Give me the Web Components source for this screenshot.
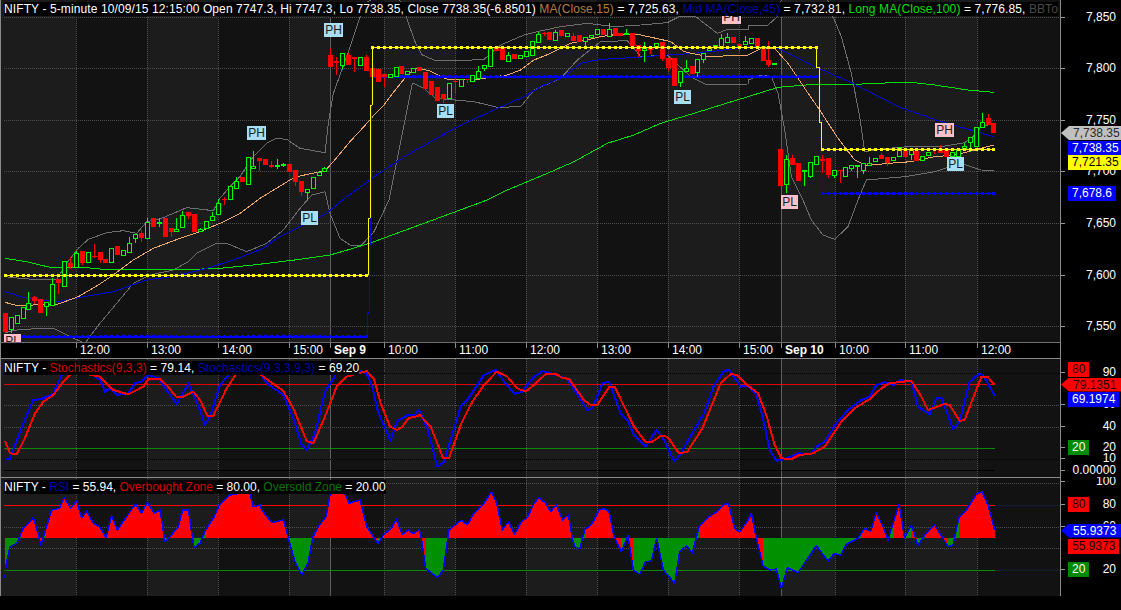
<!DOCTYPE html>
<html>
<head>
<meta charset="utf-8">
<title>NIFTY</title>
<style>
  html, body { margin: 0; background: #000; }
  body { font: 12px "Liberation Sans", Arial, sans-serif; color: #fff; overflow: hidden; }
  .o { color: #b87f45; } .n { color: #0000b4; } .g { color: #00e000; } .d { color: #4a4a4a; }
  .r { color: #dc0000; } .z { color: #007a00; }
</style>
</head>
<body>
<chart-app>
  <chart-pane top="0" plot="342" spacing="0.105">
    <price-plot slot="canvas"></price-plot>
    <chart-marker x="324" y="23" kind="high">PH</chart-marker>
    <chart-marker x="247" y="126" kind="high">PH</chart-marker>
    <chart-marker x="301" y="211" kind="high">PL</chart-marker>
    <chart-marker x="437" y="104" kind="high">PL</chart-marker>
    <chart-marker x="674" y="90" kind="high">PL</chart-marker>
    <chart-marker x="947" y="157" kind="high">PL</chart-marker>
    <chart-marker x="722" y="10" kind="low">PH</chart-marker>
    <chart-marker x="935" y="123" kind="low">PH</chart-marker>
    <chart-marker x="781" y="195" kind="low">PL</chart-marker>
    <chart-marker x="4" y="334" kind="low">PL</chart-marker>
    <span slot="title">NIFTY - 5-minute 10/09/15 12:15:00 Open 7747.3, Hi 7747.3, Lo 7738.35, Close 7738.35(-6.8501) <span class="o">MA(Close,15)</span> = 7,725.63, <span class="n">Mid MA(Close,45)</span> = 7,732.81, <span class="g">Long MA(Close,100)</span> = 7,776.85, <span class="d">BBTop(Close,20,2)</span></span>
    <axis-label slot="axis" y="17">7,850</axis-label>
    <axis-label slot="axis" y="68">7,800</axis-label>
    <axis-label slot="axis" y="120">7,750</axis-label>
    <axis-label slot="axis" y="171">7,700</axis-label>
    <axis-label slot="axis" y="223">7,650</axis-label>
    <axis-label slot="axis" y="275">7,600</axis-label>
    <axis-label slot="axis" y="326">7,550</axis-label>
    <axis-tag slot="axis" y="133" bg="#c0c0c0" fg="#2a2a2a" arrow>7,738.35</axis-tag>
    <axis-tag slot="axis" y="148" bg="#0000ff" fg="#fff">7,738.35</axis-tag>
    <axis-tag slot="axis" y="162.5" bg="#ffff00" fg="#000">7,721.35</axis-tag>
    <axis-tag slot="axis" y="193.5" bg="#0000ff" fg="#fff">7,678.6</axis-tag>
    <time-tick slot="times" x="76">12:00</time-tick>
    <time-tick slot="times" x="147">13:00</time-tick>
    <time-tick slot="times" x="218">14:00</time-tick>
    <time-tick slot="times" x="289">15:00</time-tick>
    <time-tick slot="times" x="330" day>Sep 9</time-tick>
    <time-tick slot="times" x="384">10:00</time-tick>
    <time-tick slot="times" x="455">11:00</time-tick>
    <time-tick slot="times" x="526">12:00</time-tick>
    <time-tick slot="times" x="597">13:00</time-tick>
    <time-tick slot="times" x="668">14:00</time-tick>
    <time-tick slot="times" x="739">15:00</time-tick>
    <time-tick slot="times" x="781" day>Sep 10</time-tick>
    <time-tick slot="times" x="835">10:00</time-tick>
    <time-tick slot="times" x="905">11:00</time-tick>
    <time-tick slot="times" x="977">12:00</time-tick>
  </chart-pane>

  <chart-pane top="358" plot="119" ruled spacing="0.06">
    <stoch-plot slot="canvas"></stoch-plot>
    <span slot="title">NIFTY - <span class="r">Stochastics(9,3,3)</span> = 79.14, <span class="n">Stochastics(9,3,3,9,3)</span> = 69.20</span>
    <axis-label slot="axis" y="373">90</axis-label>
    <axis-label slot="axis" y="405">60</axis-label>
    <axis-label slot="axis" y="427">40</axis-label>
    <axis-label slot="axis" y="448">20</axis-label>
    <axis-label slot="axis" y="459">10</axis-label>
    <axis-label slot="axis" y="471">0.00000</axis-label>
    <axis-tag slot="axis" y="370.5" bg="#ff0000" fg="#200000">80</axis-tag>
    <axis-tag slot="axis" y="385.5" bg="#ff0000" fg="#200000" arrow>79.1351</axis-tag>
    <axis-tag slot="axis" y="400.5" bg="#0000ff" fg="#fff">69.1974</axis-tag>
    <axis-tag slot="axis" y="448.5" bg="#008a00" fg="#fff">20</axis-tag>
  </chart-pane>

  <chart-pane top="477" plot="119" ruled>
    <rsi-plot slot="canvas"></rsi-plot>
    <span slot="title">NIFTY - <span class="n">RSI</span> = 55.94, <span class="r">Overbought Zone</span> = 80.00, <span class="z">Oversold Zone</span> = 20.00</span>
    <axis-label slot="axis" y="482">100</axis-label>
    <axis-label slot="axis" y="505">80</axis-label>
    <axis-label slot="axis" y="527">60</axis-label>
    <axis-label slot="axis" y="570">20</axis-label>
    <axis-tag slot="axis" y="505.5" bg="#ff0000" fg="#200000">80</axis-tag>
    <axis-tag slot="axis" y="531.5" bg="#0000ff" fg="#fff" arrow>55.9373</axis-tag>
    <axis-tag slot="axis" y="547" bg="#ff0000" fg="#200000">55.9373</axis-tag>
    <axis-tag slot="axis" y="570.5" bg="#008a00" fg="#fff">20</axis-tag>
  </chart-pane>
</chart-app>

<script>
const NS = 'http://www.w3.org/2000/svg'

// bar position: 12 bars per hour, 71px per hour
const barX = (i) => 5.3 + 5.92 * i

// colour bands, one per hour
const BANDS = [[1, 76, 1], [76, 147, 0], [147, 218, 1], [218, 289, 0], [289, 330, 1], [330, 384, 0], [384, 455, 1],
  [455, 526, 0], [526, 597, 1], [597, 668, 0], [668, 739, 1], [739, 781, 0], [781, 835, 1],
  [835, 905, 0], [905, 977, 1], [977, 1060, 0]]
const GRID_X = [76, 147, 218, 289, 384, 455, 526, 597, 668, 739, 835, 905, 977]
const DAY_X = [330, 781]

// traces are written in the coordinates of a 3x crop, t() brings them to the page
const t = (ox, oy, pts) => pts.map(([x, y]) => [ox + x / 3, oy + y / 3])

class ChartApp extends HTMLElement {
  constructor() {
    super()
    this.attachShadow({ mode: 'open' }).innerHTML = `
      <style>:host { display: flex; flex-direction: column; width: 1121px; height: 610px; background: #000; }</style>
      <slot></slot>`
  }
}

class ChartPane extends HTMLElement {
  constructor() {
    super()
    this.attachShadow({ mode: 'open' }).innerHTML = `
      <style>
        :host { display: grid; grid-template-columns: 1061px 60px; }
        .plot, .times { border-left: 1px solid #8a8a8a; border-right: 1px solid #8a8a8a; box-sizing: border-box; position: relative; overflow: hidden; }
        .title { position: absolute; left: 3px; top: 2px; height: 14px; line-height: 14px; background: #000; white-space: nowrap; max-width: 1054px; overflow: hidden; color: #fff; }
        .axis { position: relative; grid-row: 1 / span 2; grid-column: 2; background: #000; overflow: hidden; }
        .times { height: 16px; background: #000; border-top: 1px solid #6e6e6e; }
        :host([ruled]) .plot { border-top: 1px solid #8a8a8a; }
      </style>
      <div class="plot"><slot name="canvas"></slot><slot></slot><div class="title"><slot name="title"></slot></div></div>
      <div class="axis"><slot name="axis"></slot></div>
      <div class="times"><slot name="times"></slot></div>`
  }
  connectedCallback() {
    const plot = this.shadowRoot.querySelector('.plot')
    plot.style.height = this.getAttribute('plot') + 'px'
    if (this.hasAttribute('spacing')) this.shadowRoot.querySelector('.title').style.letterSpacing = this.getAttribute('spacing') + 'px'
    if (!this.querySelector('[slot=times]')) this.shadowRoot.querySelector('.times').style.display = 'none'
  }
}

// anything pinned to the chart gets page coordinates and converts them to its pane
class PinnedElement extends HTMLElement {
  get paneTop() {
    const pane = this.closest('chart-pane')
    return +pane.getAttribute('top') + (pane.hasAttribute('ruled') ? 1 : 0)
  }
}

class ChartMarker extends PinnedElement {
  constructor() {
    super()
    this.attachShadow({ mode: 'open' }).innerHTML = `
      <style>
        :host { position: absolute; display: block; width: 19px; height: 14px; line-height: 14px; text-align: center; color: #1c1c1c; background: #a9dff5; }
        :host([kind=low]) { background: #ffc0cb; }
      </style><slot></slot>`
  }
  connectedCallback() {
    this.style.left = (this.getAttribute('x') - 1) + 'px'
    this.style.top = (this.getAttribute('y') - this.paneTop) + 'px'
    if (this.textContent === 'PL') this.style.width = '17px'
  }
}

class AxisLabel extends PinnedElement {
  constructor() {
    super()
    this.attachShadow({ mode: 'open' }).innerHTML = `
      <style>
        :host { position: absolute; left: 0; right: 5px; height: 14px; line-height: 14px; text-align: right; color: #fff; }
        i { position: absolute; left: 0; top: 7px; width: 4px; height: 1px; background: #9a9a9a; }
      </style><i></i><slot></slot>`
  }
  connectedCallback() {
    this.style.top = (this.getAttribute('y') - this.paneTop - 7) + 'px'
  }
}

class AxisTag extends PinnedElement {
  constructor() {
    super()
    this.attachShadow({ mode: 'open' }).innerHTML = `
      <style>
        :host { position: absolute; left: 7px; height: 15px; line-height: 15px; padding: 0 4px; white-space: nowrap; z-index: 2; }
        :host([arrow]) { left: 0; right: 0; height: 14px; line-height: 14px; padding: 0 0 0 12px; clip-path: polygon(0 50%, 8px 0, 100% 0, 100% 100%, 8px 100%); }
      </style><slot></slot>`
  }
  connectedCallback() {
    const h = this.hasAttribute('arrow') ? 7 : 7.5
    this.style.top = (this.getAttribute('y') - this.paneTop - h) + 'px'
    this.style.background = this.getAttribute('bg')
    this.style.color = this.getAttribute('fg')
  }
}

class TimeTick extends HTMLElement {
  constructor() {
    super()
    this.attachShadow({ mode: 'open' }).innerHTML = `
      <style>
        :host { position: absolute; top: 0; height: 15px; line-height: 15px; padding-left: 3px; border-left: 1px solid #8a8a8a; border-image: linear-gradient(#8a8a8a 5px, transparent 5px) 1; white-space: nowrap; color: #fff; }
        :host([day]) { font-weight: bold; }
      </style><slot></slot>`
  }
  connectedCallback() {
    this.style.left = (this.getAttribute('x') - 1) + 'px'
  }
}

// base of the three plots: one svg in page coordinates, bands and grid already drawn
class ChartPlot extends HTMLElement {
  constructor() {
    super()
    this.attachShadow({ mode: 'open' }).innerHTML = `
      <style>:host { display: block; height: 100%; } svg { display: block; }</style>
      <svg xmlns="${NS}" shape-rendering="crispEdges"></svg>`
    this.svg = this.shadowRoot.querySelector('svg')
  }
  connectedCallback() {
    const pane = this.closest('chart-pane')
    const ruled = pane.hasAttribute('ruled') ? 1 : 0
    const top = +pane.getAttribute('top') + ruled
    const h = +pane.getAttribute('plot') - ruled
    this.top = top
    this.bottom = top + h
    this.svg.setAttribute('width', 1059)
    this.svg.setAttribute('height', h)
    this.svg.setAttribute('viewBox', `1 ${top} 1059 ${h}`)
    for (const [a, b, light] of BANDS) this.rect(a, top, b - a, h, light ? '#1c1c1c' : '#121212')
    this.draw()
  }
  el(name, attrs) {
    const node = document.createElementNS(NS, name)
    for (const k in attrs) node.setAttribute(k, attrs[k])
    this.svg.appendChild(node)
    return node
  }
  rect(x, y, w, h, fill) { return this.el('rect', { x, y, width: w, height: h, fill }) }
  line(x1, y1, x2, y2, stroke, dash, w = 1) {
    const attrs = { x1, y1, x2, y2, stroke, 'stroke-width': w }
    if (dash) attrs['stroke-dasharray'] = dash
    return this.el('line', attrs)
  }
  poly(pts, stroke, w = 1) {
    return this.el('polyline', { points: pts.map((p) => p.join(',')).join(' '), fill: 'none', stroke, 'stroke-width': w, 'stroke-linejoin': 'round' })
  }
  grid(ys, from) {
    for (const x of GRID_X) this.line(x + 0.5, from, x + 0.5, this.bottom, '#505050', '1 1')
    for (const x of DAY_X) this.line(x + 0.5, from, x + 0.5, this.bottom, '#5e5e5e')
    for (const [y, c] of ys) this.line(4, y + 0.5, 1060, y + 0.5, c || '#505050', '1 1')
  }
}

// 3x crop values: colour, body top, body bottom, wick top, wick bottom (0 = no wick)
const CANDLES = [
  [180, [['r',400,455],['g',412,450,0,460],['g',405,433],['g',382,418],['g',370,390,337,0],['r',350,362,348,372],['r',357,398],['g',365,380,0,408],['g',313,378,295,0],['r',298,308,0,342],['g',243,322],['r',250,262,232,268],['g',220,265,212,0],['r',213,248,0,255],['g',217,250],['r',228,232,192,235],['r',217,240,0,250],['r',237,250],['g',205,248],['r',198,225],['g',209,228],['g',190,220,172,0],['g',163,176,0,190],['r',158,175,150,185],['g',127,177,113,0],['r',114,140],['g',127,129,115,142],['r',113,170],['r',145,155,0,172],['g',148,155,115,0],['g',105,143,92,0],['r',95,107,0,117],['r',102,156],['g',148,155,143,0],['g',122,148],['g',107,122,95,0],['g',70,105,58,0],['r',58,61,50,75],['g',17,60]]],
  [0, [['g',544,566,530,0],['r',532,546],['g',472,556],['g',498,506,452,0],['r',475,483,0,513],['r',477,495],['r',495,500,482,503],['g',495,498,478,508],['g',492,497,488,502],['r',492,516],['r',510,545,0,558],['r',543,576,0,588],['g',568,578,0,600],['g',532,566],['g',517,529],['g',505,517,500,0],['r',165,200,143,0],['r',183,190,172,225],['g',160,197,0,207],['r',165,195,160,0],['r',172,176,0,215],['g',170,197],['r',172,212,166,0],['r',205,230],
    ['r',207,245],['r',222,232,0,262],['g',223,235],['g',202,232],['r',198,222],['g',213,225],['g',205,220],['r',202,214],['r',215,268],['r',243,285],['r',262,304],['r',282,298,0,310],['g',250,298],['r',243,245,235,282],['g',238,260],['r',237,239,0,248],['g',226,247],['g',212,236,198,0],['g',196,206,0,212],['g',143,200],['r',143,153],['r',143,180],['g',165,185,155,0],['r',162,178],['g',165,177],['g',154,172],['g',122,168],['g',103,130,97,0],['r',99,103,95,108],['r',97,120],['g',97,122,90,0],['r',90,108],['g',100,110],['r',107,122,98,0],['r',105,127],['g',110,125,0,140],['g',105,115],['g',88,106],['r',88,105],['g',88,110,68,0],['r',85,108],['r',100,108],['g',100,106,88,0],['r',98,138],['r',135,152,0,170],['g',143,152,125,185],['r',145,150,0,162],['g',130,145],['r',125,178,0,182],['r',175,205,0,212],['r',175,258],['g',212,248,0,262],['g',205,217,180,0],['r',197,223],['g',178,218,0,230],['g',160,180,0,190],['g',143,152],['g',135,145],['g',115,148,103,0],['g',112,128,100,0],['r',112,130],['r',132,140,0,155],['g',122,135,108,0],
    ['g',115,132],['r',115,145],['r',138,183],['r',180,195,123,200],['g',188,192],['r',447,557],['g',478,556,465,578],['r',473,496,465,0],['r',489,542],['g',510,515,0,558],['g',487,530,0,535],['g',469,496],['r',478,483,465,520],['r',475,525,0,533],['g',511,527,0,533],['r',509,512,0,548],['g',502,532],['g',496,507,0,512],['g',495,500,0,533],['g',488,512,0,522],['g',490,497,470,0],['g',473,487],['r',466,478,460,0],['r',472,490,0,498],['g',472,484],['g',442,470],['r',450,472],['g',450,464,0,480],['r',452,483],['g',468,482],['g',456,467],['r',448,450,0,463],['r',448,460,435,0],['r',450,472],['g',455,470],['g',447,470],['g',438,451,428,0],['g',412,430,0,455],['g',381,440],['g',367,385,340,0],['r',355,376,343,0],['r',369,398]]]
]

const MA15 = [...t(0, 180, [[15,367],[45,375],[100,375],[175,372],[235,350],[290,318],[340,285],[400,240],[460,205],[540,175],[600,155],[660,130],[720,100],[780,55],[870,0]]),
  ...t(0, 0, [[890,530],[975,512],[1000,485],[1050,425],[1110,360]]),
  ...t(374, 0, [[0,345],[30,315],[60,275],[100,225],[130,205],[165,212],[220,238],[300,240],[350,232],[400,225],[440,210],[480,180],[530,160],[590,130],[640,120],[680,110],[730,103],[800,105],[860,118],[890,125],[930,155],[1000,170],[1122,165]]),
  ...t(748, 0, [[40,145],[80,145],[120,190],[170,265],[215,330],[270,415],[320,480],[355,497],[420,490],[490,485],[560,470],[620,465],[680,450],[737,435]])]

const MA45 = [...t(0, 180, [[15,335],[80,355],[175,365],[240,352],[340,335],[440,300],[530,288],[620,265],[700,240],[790,205],[830,175],[900,140],[980,100],[1040,50],[1110,0]]),
  ...t(374, 0, [[0,530],[100,465],[250,380],[370,325],[450,290],[500,260],[570,230],[620,190],[680,178],[790,172],[880,165],[960,160],[1050,150],[1122,140]]),
  ...t(748, 0, [[88,143],[200,200],[315,250],[450,320],[570,362],[737,410]])]

const MA100 = [...t(0, 180, [[15,235],[80,245],[150,262],[260,263],[310,268],[580,268],[660,265],[760,255],[900,238],[990,225],[1060,205],[1122,185]]),
  ...t(374, 0, [[340,600],[400,570],[520,520],[600,485],[700,430],[780,405],[860,370],[960,340],[1040,315],[1122,290]]),
  ...t(748, 0, [[90,262],[200,253],[320,253],[480,246],[560,255],[660,270],[737,277]])]

const BB_TOP = [...t(0, 180, [[15,290],[60,295],[100,298],[170,298],[200,250],[235,205],[265,178],[320,158],[370,152],[410,160],[440,125],[480,117],[560,83],[640,92],[660,55],[690,20]]),
  ...t(0, 0, [[720,530],[760,470],[800,430],[830,415],[860,418],[900,445],[975,458],[985,370],[1000,280],[1040,170],[1080,50],[1095,10]]),
  ...t(374, 0, [[60,-40],[97,50],[105,75],[125,130],[145,165],[180,180],[240,183],[330,178],[380,135],[450,105],[490,95],[560,80],[640,70],[720,80],[800,75],[880,68],[915,50],[965,50],[1030,100],[1060,88],[1122,90]]),
  ...t(748, 0, [[0,75],[60,75],[88,50],[98,5],[110,-30],[230,-30],[255,50],[280,110],[310,220],[335,350],[350,455],[420,445],[480,440],[580,440],[650,428],[675,410],[700,380],[737,370]])]

const BB_BOT = [...t(0, 180, [[15,458],[60,448],[160,445],[210,470],[255,490],[300,430],[400,310],[450,285],[520,270],[565,245],[590,220],[650,190],[680,190],[740,215],[800,190],[850,150],[900,85],[935,45],[975,35],[990,100],[1020,175],[1050,195],[1085,195],[1122,155]]),
  ...t(374, 0, [[45,600],[85,400],[115,250],[120,250],[150,265],[185,295],[300,305],[370,322],[440,320],[480,270],[560,235],[610,180],[680,125],[760,122],[800,170],[880,165],[950,230],[1000,255],[1122,252]]),
  ...t(748, 0, [[0,240],[40,225],[70,230],[90,280],[110,390],[130,530],[165,600],[190,660],[225,705],[260,718],[300,680],[330,600],[355,540],[470,530],[560,515],[640,490],[700,510],[737,512]])]

class PricePlot extends ChartPlot {
  draw() {
    this.grid([[17], [68], [120], [171], [223], [275], [326]], 17)
    this.poly(BB_TOP, '#6e6e6e')
    this.poly(BB_BOT, '#6e6e6e')
    this.poly(MA100, '#00e000')
    this.poly(MA45, '#0000e0')
    this.poly(MA15, '#f0a868')

    // pivot levels, blue below the bars
    this.levels('#0000ff', 3, [[0, 61, 336, 2], [62, 137, 76, 2], [138, 167, 193, 1]])
    this.poly([[367, 336], [367, 313], [369, 313], [371, 180], [372, 76]], '#0000ff', 1)
    this.poly([[816, 76], [819, 76], [819, 137], [821, 137], [821, 193]], '#0000ff', 1)

    let i = 0
    for (const [oy, bars] of CANDLES) {
      for (const bar of bars) this.candle(Math.floor(barX(i++)), oy, bar)
    }

    this.poly([[368, 275], [368, 218], [370, 218], [370, 105], [372, 105], [372, 47]], '#ffff00', 1)
    this.poly([[816, 47], [816, 67], [819, 67], [819, 122], [821, 122], [821, 149]], '#ffff00', 1)
    this.levels('#ffff00', 3, [[0, 61, 275, 1], [62, 137, 47, 1], [138, 167, 149, 1]])
  }
  levels(color, dot, runs) {
    for (const [a, b, y, w] of runs) {
      this.line(barX(a), y + 0.5, barX(b), y + 0.5, color, null, w)
      for (let i = a; i <= b; i++) this.rect(Math.floor(barX(i)) - 1, y + 0.5 - dot / 2, dot, dot, color)
    }
  }
  candle(x, oy, [color, top, bot, hi, lo]) {
    const y = (v) => Math.round(oy + v / 3)
    const c = color === 'r' ? '#ff0000' : '#00ff00'
    const yt = y(top)
    const yb = y(bot)
    if (hi) this.rect(x, y(hi), 1, yt - y(hi), c)
    if (lo) this.rect(x, yb, 1, y(lo) - yb, c)
    if (color === 'r') this.rect(x - 2, yt, 5, Math.max(yb - yt, 1), c)
    else this.el('rect', { x: x - 1.5, y: yt + 0.5, width: 4, height: Math.max(yb - yt - 1, 1), fill: '#141414', stroke: c })
  }
}

const STOCH_BLUE = [...t(0, 355, [[15,310],[30,313],[45,270],[70,205],[100,135],[125,132],[160,115],[190,50],[215,30],[240,55],[280,60],[300,75],[315,110],[330,100],[350,120],[385,115],[405,85],[425,80],[445,60],[475,70],[500,105],[530,148],[565,85],[590,140],[615,210],[630,185],[660,90],[690,55],[710,30],[770,40],[800,85],[850,120],[880,190],[905,270],[920,285],[945,235],[975,110],[1010,55],[1040,30],[1100,55]]),
  ...t(374, 355, [[-5,95],[12,170],[50,258],[68,200],[100,180],[120,182],[135,165],[160,220],[190,335],[210,320],[260,155],[280,135],[300,105],[330,60],[365,45],[390,80],[422,117],[445,110],[475,70],[505,48],[545,60],[580,72],[640,165],[655,160],[685,85],[705,80],[740,175],[760,195],[780,240],[815,275],[848,225],[870,255],[900,318],[915,305],[940,260],[990,175],[1020,90],[1050,48],[1065,45],[1100,95]]),
  ...t(748, 355, [[0,92],[25,120],[45,190],[65,285],[85,317],[105,315],[150,295],[190,297],[205,275],[230,260],[265,205],[300,165],[340,135],[365,125],[385,90],[410,82],[438,90],[455,75],[490,80],[510,155],[545,178],[565,130],[580,128],[615,222],[635,200],[665,80],[695,55],[705,60],[740,122]])]

const STOCH_RED = [...t(0, 355, [[15,258],[30,295],[50,297],[70,260],[105,175],[130,140],[160,120],[190,80],[220,50],[250,55],[300,65],[340,105],[385,118],[430,95],[445,72],[480,72],[500,90],[530,127],[550,125],[580,110],[600,135],[622,182],[640,182],[680,100],[710,55],[760,40],[790,65],[850,108],[880,160],[920,258],[940,265],[975,185],[1010,95],[1040,65],[1100,48]]),
  ...t(374, 355, [[0,72],[20,145],[48,215],[70,225],[85,215],[105,188],[120,187],[137,180],[170,215],[208,310],[225,310],[262,205],[295,140],[330,90],[368,50],[400,65],[430,100],[455,110],[480,90],[515,57],[545,57],[565,68],[585,72],[630,135],[650,150],[670,150],[705,97],[722,95],[780,215],[815,262],[835,260],[860,243],[880,245],[915,295],[940,290],[985,220],[1040,85],[1070,57],[1090,60]]),
  ...t(748, 355, [[0,92],[30,115],[55,180],[80,270],[100,310],[130,312],[155,300],[195,295],[230,275],[280,200],[320,160],[365,132],[400,100],[425,85],[490,77],[520,125],[540,165],[590,147],[605,150],[635,198],[650,195],[700,65],[720,67],[740,90]])]

class StochPlot extends ChartPlot {
  draw() {
    this.grid([[373, '#000'], [405], [427], [459, '#000']], this.top)
    this.line(4, 470.5, 995, 470.5, '#000')
    this.line(4, 384.5, 995, 384.5, '#e00000')
    this.line(4, 448.5, 995, 448.5, '#0a8a0a')
    this.poly(STOCH_BLUE, '#0000ff', 2)
    this.poly(STOCH_RED, '#ff0000', 2)
  }
}

const RSI = [...t(0, 475, [[15,310],[18,270],[30,215],[50,205],[62,178],[70,160],[100,128],[115,178],[122,210],[135,170],[155,105],[178,100],[193,68],[212,100],[230,78],[245,130],[260,108],[280,145],[298,155],[318,188],[335,122],[352,165],[380,125],[406,87],[425,115],[442,82],[462,115],[480,105],[495,200],[510,185],[535,155],[548,105],[565,105],[582,218],[600,205],[617,165],[640,130],[658,90],[690,60],[720,55],[748,50],[760,95],[780,90],[785,105],[815,143],[850,135],[865,190],[885,260],[905,300],[925,260],[938,188],[955,155],[978,125],[990,60],[1005,45],[1030,45],[1047,85],[1080,75],[1100,155]]),
  ...t(374, 475, [[0,188],[12,205],[30,178],[50,163],[67,132],[85,178],[103,165],[118,176],[135,165],[142,188],[155,280],[190,308],[208,285],[225,165],[262,135],[280,150],[300,115],[330,85],[352,50],[368,85],[385,165],[403,140],[422,178],[442,140],[460,128],[480,85],[495,68],[515,85],[530,110],[547,90],[565,135],[583,120],[595,190],[602,215],[617,222],[632,165],[655,145],[675,105],[690,100],[705,110],[720,185],[742,230],[762,182],[778,285],[797,298],[815,260],[832,258],[848,190],[868,285],[902,325],[917,230],[938,212],[955,235],[975,155],[1005,125],[1030,110],[1050,88],[1063,85],[1082,160],[1097,172]]),
  ...t(748, 475, [[0,135],[10,115],[25,188],[45,272],[65,285],[85,282],[100,340],[118,278],[150,293],[205,212],[240,258],[258,236],[278,240],[295,208],[330,190],[340,175],[350,160],[368,170],[385,113],[405,155],[420,195],[437,140],[453,88],[470,190],[490,150],[510,212],[530,180],[560,150],[600,215],[615,210],[632,130],[655,105],[685,58],[702,50],[720,90],[740,165]])]

class RsiPlot extends ChartPlot {
  draw() {
    const base = 537.7
    this.grid([[483], [527], [548]], this.top)
    // each step takes the colour of the point it starts from
    for (let i = 0; i < RSI.length - 1; i++) {
      const [x1, y1] = RSI[i]
      const [x2, y2] = RSI[i + 1]
      const fill = y1 <= base ? '#ff0000' : '#009000'
      this.el('polygon', { points: `${x1},${base} ${x1},${y1} ${x2},${y2} ${x2},${base}`, fill })
    }
    this.line(4, 505.5, 995, 505.5, '#ff0000', null, 1.5)
    this.line(995, 505.5, 1060, 505.5, '#0000ff', '1 1')
    this.line(4, 570.5, 995, 570.5, '#0a8a0a')
    this.line(995, 570.5, 1060, 570.5, '#0000ff', '1 1')
    this.poly(RSI, '#0000ff', 1.5)
  }
}

customElements.define('chart-app', ChartApp)
customElements.define('chart-pane', ChartPane)
customElements.define('chart-marker', ChartMarker)
customElements.define('axis-label', AxisLabel)
customElements.define('axis-tag', AxisTag)
customElements.define('time-tick', TimeTick)
customElements.define('price-plot', PricePlot)
customElements.define('stoch-plot', StochPlot)
customElements.define('rsi-plot', RsiPlot)
</script>
</body>
</html>
